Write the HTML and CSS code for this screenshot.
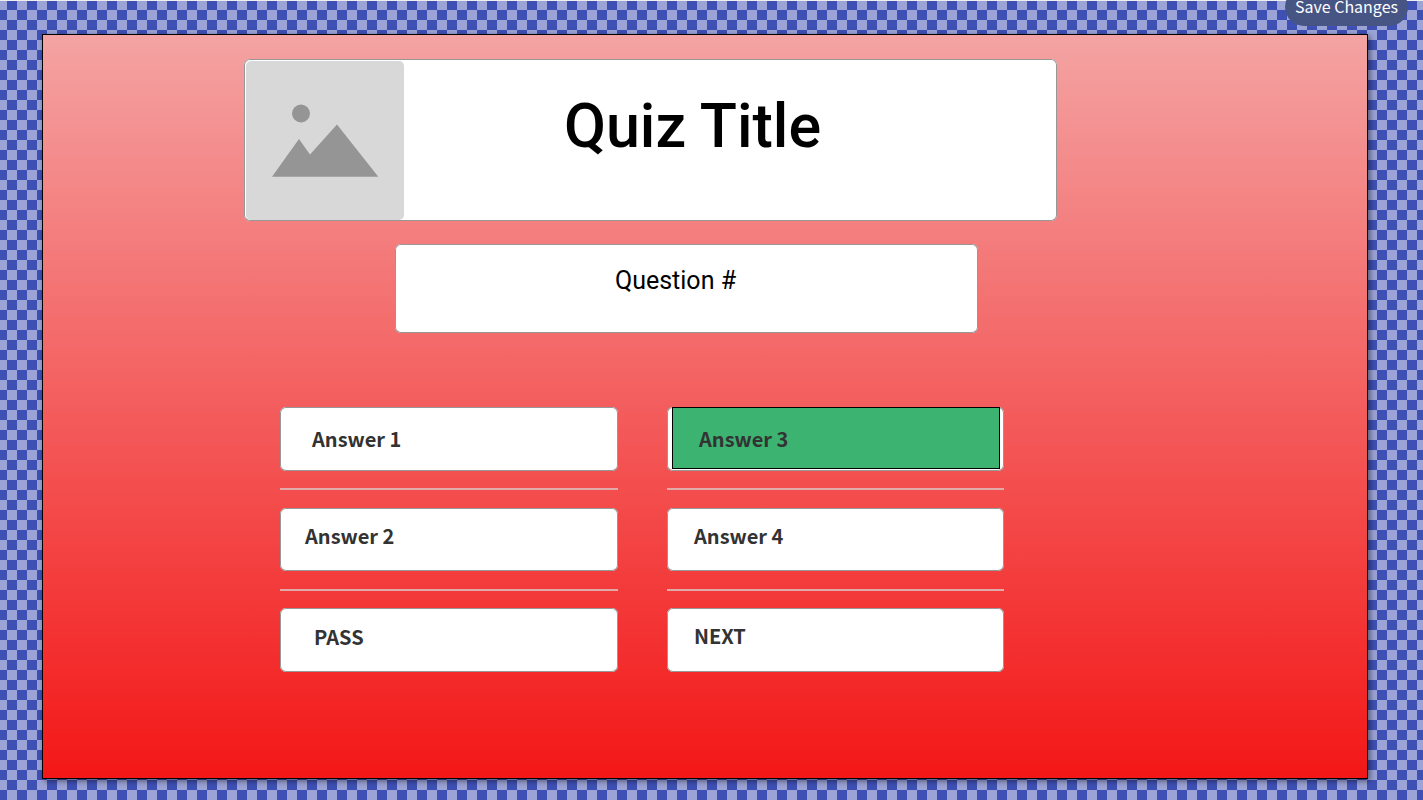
FILE: index.html
```html
<!DOCTYPE html>
<html lang="en">
<head>
<meta charset="utf-8">
<meta name="viewport" content="width=device-width, initial-scale=1">
<title>Quiz Title</title>
<link rel="stylesheet" href="styles.css">
</head>
<body class="page">
<button type="button" class="save">Save Changes</button>
<main class="board">
  <div class="row row-header">
    <header class="panel header">
      <svg class="thumb" viewBox="0 0 158 159" role="img" aria-label="Quiz image">
        <rect width="158" height="159" rx="5" fill="#d8d8d8"/>
        <circle cx="55" cy="52.500" r="9" fill="#959595"/>
        <path d="M26 115.700 53 78 64 93.500 91 63.500 132.300 115.700Z" fill="#959595"/>
      </svg>
      <h1 class="title">Quiz Title</h1>
    </header>
  </div>
  <div class="row row-question">
    <h2 class="panel question">Question #</h2>
  </div>
  <div class="row row-answers">
    <div class="answers">
      <button type="button" class="panel answer first">Answer 1</button>
      <hr class="rule">
      <button type="button" class="panel answer middle">Answer 2</button>
      <hr class="rule">
      <button type="button" class="panel answer pass">PASS</button>
    </div>
    <div class="answers">
      <div class="panel slot"><button type="button" class="answer selected">Answer 3</button></div>
      <hr class="rule">
      <button type="button" class="panel answer middle">Answer 4</button>
      <hr class="rule">
      <button type="button" class="panel answer">NEXT</button>
    </div>
  </div>
</main>
</body>
</html>
```
FILE: styles.css
```css
* {
  box-sizing: border-box;
}

.page {
  margin: 0;
  min-height: 100vh;
  padding: 33px 55px 21px 42px;
  display: flex;
  border-top: 1px solid #eeeeee;
  background: repeating-conic-gradient(#9ca4d7 0% 25%, #3f50b5 0% 50%) 7px 0 / 20px 20px;
  font-family: "Noto Sans CJK SC", "Noto Sans", sans-serif;
}

.save {
  position: absolute;
  top: -12px;
  right: 15px;
  height: 38px;
  padding: 0 10px 2px;
  border: 0;
  border-radius: 19px;
  background: #475585;
  color: #ffffff;
  font: 400 16px/36px "Noto Sans CJK SC", "Noto Sans", sans-serif;
  white-space: nowrap;
}

.board {
  flex: 1;
  padding-top: 24px;
  border: 1px solid #000000;
  background: linear-gradient(#f4a3a3, #f31717);
  box-shadow: 2px 2px 6px rgba(0, 0, 0, 0.5);
}

.row {
  display: grid;
}

.row-header {
  grid-template-columns: 201fr 813fr 310fr;
  margin-bottom: 23px;
}

.row-question {
  grid-template-columns: 352fr 583fr 389fr;
  margin-bottom: 74px;
}

.row-answers {
  grid-template-columns: 237fr 338fr 49fr 337fr 363fr;
}

.panel {
  border-radius: 6px;
  background: #ffffff;
  box-shadow: inset 0 0 0 1px #979797;
}

.header {
  grid-column: 2;
  display: flex;
  min-height: 162px;
  padding: 2px 2px 1px;
}

.thumb {
  width: 158px;
  height: 159px;
}

.title {
  flex: 1;
  margin: 0;
  padding: 30px 74px 0 0;
  font: 500 61px/70px Roboto, sans-serif;
  text-align: center;
  color: #000000;
}

.question {
  grid-column: 2;
  min-height: 89px;
  margin: 0;
  padding: 23px 22px 0 0;
  font: 400 25px/28px Roboto, sans-serif;
  text-align: center;
  color: #000000;
}

.answers {
  grid-column: 2;
  display: flex;
  flex-direction: column;
}

.answers + .answers {
  grid-column: 4;
}

.answer {
  height: 64px;
  padding: 0 27px 8px;
  border: 0;
  color: #333333;
  font: 700 20px/30px "Noto Sans CJK SC", "Noto Sans", sans-serif;
  text-align: left;
}

.first {
  padding: 0 32px;
}

.middle {
  height: 63px;
}

.answers:first-child .middle {
  padding-left: 25px;
}

.pass {
  padding: 0 34px 6px;
}

.slot {
  height: 64px;
  padding: 0 4px 2px 5px;
}

.selected {
  width: 100%;
  height: 62px;
  padding: 2px 26px 0;
  border: 1px solid #000000;
  background: #3cb371;
}

.rule {
  width: 100%;
  height: 2px;
  margin: 17px 0 18px;
  border: 0;
  background: #e2a9a9;
}

.middle + .rule {
  margin: 18px 0 17px;
}
```
